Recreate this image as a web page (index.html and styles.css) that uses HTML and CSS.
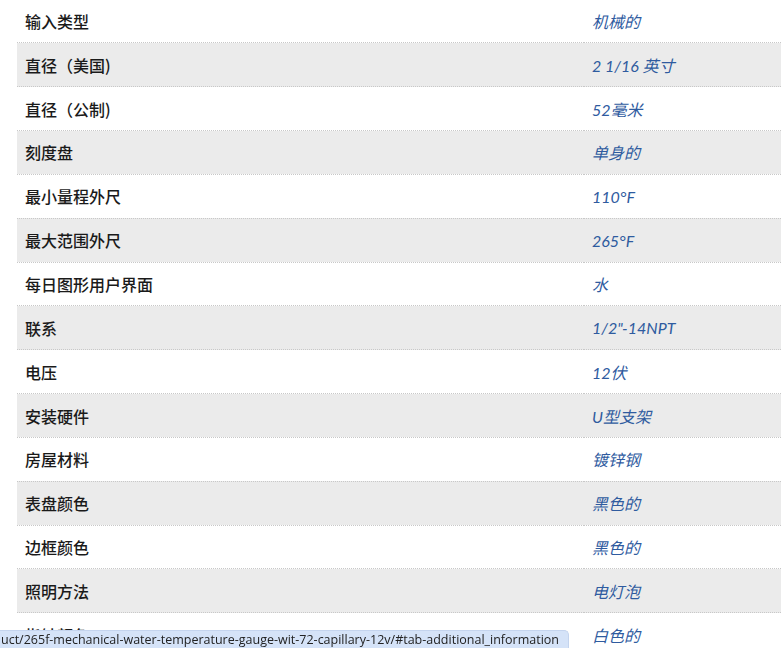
FILE: index.html
```html
<!DOCTYPE html>
<html lang="zh">
<head>
<meta charset="utf-8">
<link rel="stylesheet" href="styles.css">
</head>
<body>
<div class="page">
  <table class="specs">
    <tbody>
      <tr><th>输入类型</th><td>机械的</td></tr>
      <tr><th>直径（美国)</th><td>2 1/16 英寸</td></tr>
      <tr><th>直径（公制)</th><td>52毫米</td></tr>
      <tr><th>刻度盘</th><td>单身的</td></tr>
      <tr><th>最小量程外尺</th><td>110°F</td></tr>
      <tr><th>最大范围外尺</th><td>265°F</td></tr>
      <tr><th>每日图形用户界面</th><td>水</td></tr>
      <tr><th>联系</th><td>1/2"-14NPT</td></tr>
      <tr><th>电压</th><td>12伏</td></tr>
      <tr><th>安装硬件</th><td>U型支架</td></tr>
      <tr><th>房屋材料</th><td>镀锌钢</td></tr>
      <tr><th>表盘颜色</th><td>黑色的</td></tr>
      <tr><th>边框颜色</th><td>黑色的</td></tr>
      <tr><th>照明方法</th><td>电灯泡</td></tr>
      <tr><th>指针颜色</th><td>白色的</td></tr>
    </tbody>
  </table>
</div>
<div class="status">uct/265f-mechanical-water-temperature-gauge-wit-72-capillary-12v/#tab-additional_information</div>
</body>
</html>
```

FILE: styles.css
```css
html, body {
  margin: 0;
  padding: 0;
  background: #fff;
  overflow: hidden;
}
.page {
  padding-left: 17px;
  margin-top: -1px;
}
.specs {
  border-collapse: collapse;
  width: 780px;
}
.specs tr {
  height: 43.85px;
  border-bottom: 1px dotted #c8c8c8;
}
.specs tr:nth-child(even) {
  background: #ebebeb;
}
.specs th {
  width: 551px;
  padding: 0 8px;
  text-align: left;
  vertical-align: middle;
  font-family: "Noto Sans CJK SC", "Noto Sans", sans-serif;
  font-weight: 500;
  font-size: 16px;
  color: #1a1a1a;
}
.specs td {
  padding: 0 8px;
  vertical-align: middle;
  font-family: Lato, "Noto Sans CJK SC", sans-serif;
  font-style: italic;
  font-size: 16px;
  color: #2f5b9f;
}
.status {
  position: fixed;
  left: 0;
  bottom: 0;
  height: 17px;
  line-height: 18px;
  padding: 0 8px 0 1px;
  width: 559px;
  background: #d5e3f8;
  border-top: 1px solid #c4d4ee;
  border-right: 1px solid #c4d4ee;
  border-top-right-radius: 5px;
  font-family: "Open Sans", "DejaVu Sans", sans-serif;
  font-size: 12.5px;
  color: #222;
  white-space: nowrap;
  overflow: hidden;
}
```
